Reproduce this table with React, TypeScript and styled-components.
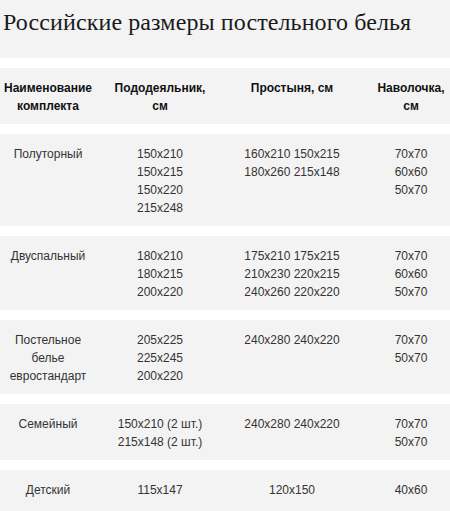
import React from 'react';
import styled, { createGlobalStyle } from 'styled-components';

const GlobalStyle = createGlobalStyle`
  html, body {
    margin: 0;
    padding: 0;
    background: #ffffff;
  }
  body {
    width: 450px;
    overflow: hidden;
  }
`;

const Page = styled.div`
  width: 450px;
  min-height: 100vh;
  display: flex;
  flex-direction: column;
  gap: 10px;
`;

const Title = styled.h1`
  margin: 0;
  height: 58px;
  box-sizing: border-box;
  padding: 7px 0 0 3px;
  background: #f3f3f4;
  font-family: "Liberation Serif", "Times New Roman", serif;
  font-weight: normal;
  font-size: 24px;
  letter-spacing: 0.1px;
  line-height: 30px;
  color: #1a1a1a;
  white-space: nowrap;
`;

const Row = styled.div<{ $head?: boolean; $fill?: boolean }>`
  display: grid;
  grid-template-columns: 96px 128px 136px 90px;
  align-content: start;
  flex-grow: ${p => (p.$fill ? 1 : 0)};
  padding: 11px 0 9px;
  background: #f3f3f4;
  font-family: "Liberation Sans", Arial, sans-serif;
  font-size: 12px;
  line-height: 18px;
  font-weight: ${p => (p.$head ? 'bold' : 'normal')};
  color: ${p => (p.$head ? '#111111' : '#333333')};
`;

const Cell = styled.div<{ $last?: boolean }>`
  display: flex;
  flex-direction: column;
  align-items: center;
  text-align: center;
  padding-left: ${p => (p.$last ? '12px' : '0')};
  white-space: nowrap;
`;

interface SetRow {
  name: string[];
  duvet: string[];
  sheet: string[];
  pillow: string[];
}

const rows: SetRow[] = [
  {
    name: ['Полуторный'],
    duvet: ['150x210', '150x215', '150x220', '215x248'],
    sheet: ['160x210 150x215', '180x260 215x148'],
    pillow: ['70x70', '60x60', '50x70'],
  },
  {
    name: ['Двуспальный'],
    duvet: ['180x210', '180x215', '200x220'],
    sheet: ['175x210 175x215', '210x230 220x215', '240x260 220x220'],
    pillow: ['70x70', '60x60', '50x70'],
  },
  {
    name: ['Постельное', 'белье', 'евростандарт'],
    duvet: ['205x225', '225x245', '200x220'],
    sheet: ['240x280 240x220'],
    pillow: ['70x70', '50x70'],
  },
  {
    name: ['Семейный'],
    duvet: ['150x210 (2 шт.)', '215x148 (2 шт.)'],
    sheet: ['240x280 240x220'],
    pillow: ['70x70', '50x70'],
  },
  {
    name: ['Детский'],
    duvet: ['115x147'],
    sheet: ['120x150'],
    pillow: ['40x60'],
  },
];

const Lines = ({ items }: { items: string[] }) => (
  <>
    {items.map((t, i) => (
      <span key={i}>{t}</span>
    ))}
  </>
);

export default function App() {
  return (
    <Page>
      <GlobalStyle />
      <Title>Российские размеры постельного белья</Title>
      <Row $head>
        <Cell><Lines items={['Наименование', 'комплекта']} /></Cell>
        <Cell><Lines items={['Пододеяльник,', 'см']} /></Cell>
        <Cell><Lines items={['Простыня, см']} /></Cell>
        <Cell $last><Lines items={['Наволочка,', 'см']} /></Cell>
      </Row>
      {rows.map((r, i) => (
        <Row key={i} $fill={i === rows.length - 1}>
          <Cell><Lines items={r.name} /></Cell>
          <Cell><Lines items={r.duvet} /></Cell>
          <Cell><Lines items={r.sheet} /></Cell>
          <Cell $last><Lines items={r.pillow} /></Cell>
        </Row>
      ))}
    </Page>
  );
}
